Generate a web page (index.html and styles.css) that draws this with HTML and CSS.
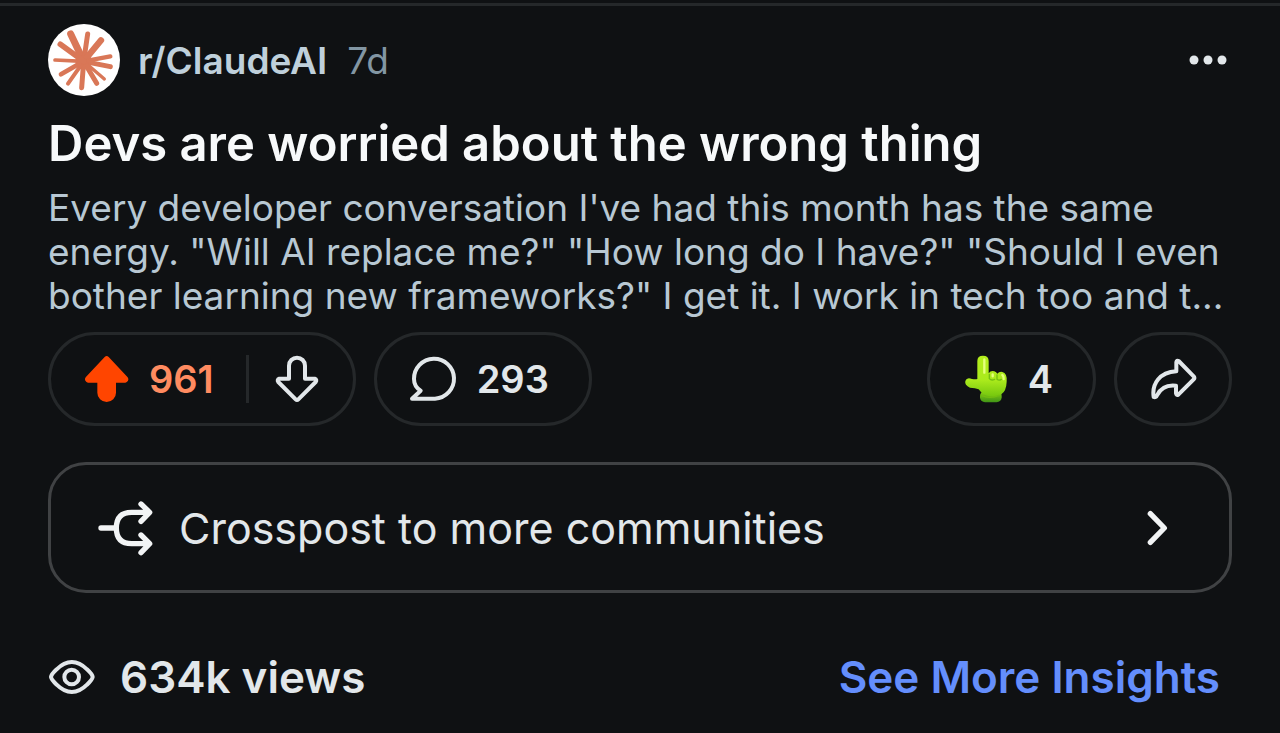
FILE: index.html
```html
<!DOCTYPE html>
<html lang="en">

<head>
    <meta charset="UTF-8">
    <meta name="viewport" content="width=device-width, initial-scale=1">
    <title>r/ClaudeAI</title>
    <link rel="stylesheet" href="styles.css">
</head>

<body>
    <article class="post">
        <header class="post-header">
            <svg class="avatar" viewBox="0 0 216 216" aria-hidden="true">
                <circle cx="108" cy="108" r="108" fill="#fff"/>
                <g stroke="#d97757" stroke-linecap="round">
                    <circle cx="107" cy="112" r="25" fill="#d97757" stroke="none"/>
                    <path d="M107 112L68 30" stroke-width="21"/>
                    <path d="M107 112L119 30" stroke-width="15"/>
                    <path d="M107 112L159 49" stroke-width="19"/>
                    <path d="M107 112L187 97" stroke-width="13"/>
                    <path d="M107 112L187 128" stroke-width="15"/>
                    <path d="M107 112L169 165" stroke-width="10"/>
                    <path d="M107 112L146 178" stroke-width="15"/>
                    <path d="M107 112L101 191" stroke-width="15"/>
                    <path d="M107 112L60 179" stroke-width="12"/>
                    <path d="M107 112L39 151" stroke-width="14"/>
                    <path d="M107 112L21 108" stroke-width="11"/>
                    <path d="M107 112L37 61" stroke-width="17"/>
                </g>
            </svg>
            <a class="community" href="#">r/ClaudeAI</a>
            <span class="age">7d</span>
            <button class="more" type="button" aria-label="More options">
                <svg viewBox="0 0 40 12"><g fill="#e2e7ea"><circle cx="6" cy="6" r="4.500"/><circle cx="20" cy="6" r="4.500"/><circle cx="34" cy="6" r="4.500"/></g></svg>
            </button>
        </header>

        <h1 class="title">Devs are worried about the wrong thing</h1>
        <p class="excerpt">Every developer conversation I've had this month has the same<br>energy. "Will AI replace me?" "How long do I have?" "Should I even<br>bother learning new frameworks?" I get it. I work in tech too and t...</p>

        <div class="actions">
            <div class="pill votes">
                <button class="upvote" type="button" aria-label="Upvote">
                    <svg class="icon" viewBox="0 0 144 144"><path fill="#ff4500" d="M65 6q6-6 12 0l57 61q4 5 1 10t-8 6H99v30a28 28 0 0 1-56 0V83H15q-5-1-8-6t1-10z"/></svg>
                    <span>961</span>
                </button>
                <button class="downvote" type="button" aria-label="Downvote">
                    <svg class="icon line" viewBox="0 0 144 144"><path d="M48 71V32a24 24 0 0 1 48 0V71H125Q133 74 128 81L76 133Q72 137 68 133L16 81Q11 74 19 71Z"/></svg>
                </button>
            </div>
            <button class="pill comments" type="button" aria-label="Comments">
                <svg class="icon line" viewBox="0 0 144 144"><path d="M78 131H9l26-24C22 99 15 86 15 72a60 60 0 1 1 63 59z"/></svg>
                <span>293</span>
            </button>
            <button class="pill award" type="button" aria-label="Awards">
                <svg class="icon" viewBox="0 0 144 144">
                    <defs>
                        <linearGradient id="hand" x1="0" y1="0" x2="0" y2="1">
                            <stop offset="0" stop-color="#b4ee1c"/>
                            <stop offset="0.6" stop-color="#aaea1c"/>
                            <stop offset="1" stop-color="#74c60e"/>
                        </linearGradient>
                        <linearGradient id="cuff" x1="0" y1="0" x2="0" y2="1">
                            <stop offset="0" stop-color="#8ed414"/>
                            <stop offset="1" stop-color="#3f9416"/>
                        </linearGradient>
                    </defs>
                    <rect x="54" y="108" width="65" height="34" rx="15" fill="url(#cuff)"/>
                    <path fill="url(#hand)" d="M46 72V18Q46 2 63 2T80 18V55Q86 46 97 49Q103 51 106 56Q112 49 121 51Q136 54 134 80Q133 108 118 118Q104 128 82 124Q62 120 50 103Q40 99 24 98Q7 91 10 78Q14 66 30 72Q40 74 46 72Z"/>
                    <path fill="none" stroke="#74bf10" stroke-width="4" stroke-linecap="round" d="M82 58v13q6 7 16 2M105 60v13q6 5 13 0M60 122q24 10 52-1"/>
                    <path fill="none" stroke="#e4ff7c" stroke-width="7" stroke-linecap="round" d="M67 13v40M92 58v6M121 60q5 4 4 12"/>
                </svg>
                <span>4</span>
            </button>
            <button class="pill share" type="button" aria-label="Share">
                <svg class="icon line" viewBox="0 0 144 144"><path d="M82 49V22q1-7 7-4l45 46q4 5 0 9l-46 46q-6 3-7-4V92C55 89 36 97 24 121q-4 8-10 5C8 86 32 52 82 49z"/></svg>
            </button>
        </div>

        <button class="crosspost" type="button">
            <svg class="branch" viewBox="0 0 168 168"><path d="M12 84H57M156 37H104Q58 37 58 84T104 131H156M132 12L158 37L132 64M132 105L158 131L132 158"/></svg>
            <span>Crosspost to more communities</span>
            <svg class="chevron" viewBox="0 0 72 108"><path d="M16 11L58 54L16 97"/></svg>
        </button>

        <footer class="stats">
            <svg class="icon line" viewBox="0 0 144 144"><path d="M9 72Q10 64 26 49Q48 27 71.500 27T117 49Q133 64 134 72Q133 80 117 95Q95 117 71.500 117T26 95Q10 80 9 72Z"/><circle cx="71" cy="72" r="22"/></svg>
            <span>634k views</span>
            <a class="insights" href="#">See More Insights</a>
        </footer>
    </article>
</body>

</html>
```
FILE: styles.css
```css
* {
    box-sizing: border-box;
}
body {
    margin: 0;
    background: #0f1113;
    color: #e2e7ea;
    font-family: Inter, "Liberation Sans", sans-serif;
}
button {
    margin: 0;
    padding: 0;
    border: 0;
    background: none;
    color: inherit;
    font: inherit;
    cursor: pointer;
}
a {
    text-decoration: none;
}
svg {
    display: block;
    flex: none;
}

.post {
    margin-top: 3px;
    padding: 18px 48px 24px;
    border-top: 3px solid #25282a;
}
.post-header {
    display: flex;
    align-items: center;
    height: 72px;
    font-size: 37px;
}
.avatar {
    width: 72px;
    height: 72px;
}
.community {
    margin-left: 18px;
    color: #bfd0db;
    font-weight: 600;
}
.age {
    margin-left: 20px;
    color: #8296a3;
}
.more {
    margin-left: auto;
    padding: 16px 4px 16px 16px;
}
.more svg {
    width: 40px;
    height: 12px;
}

.title {
    margin: 18px 0 0;
    color: #f7f9fa;
    font-size: 49px;
    font-weight: 600;
    line-height: 60px;
}
.excerpt {
    margin: 12px 0 0;
    color: #b8c8d3;
    font-size: 37px;
    line-height: 44px;
    white-space: nowrap;
}

.icon {
    width: 48px;
    height: 48px;
}
.line {
    fill: none;
    stroke: #e2e7ea;
    stroke-width: 12;
    stroke-linejoin: round;
}

.actions {
    display: flex;
    gap: 18px;
    margin-top: 14px;
    font-size: 38px;
    font-weight: 600;
}
.pill {
    display: flex;
    align-items: center;
    height: 94px;
    padding: 0 32px;
    border: 3px solid #25282a;
    border-radius: 47px;
}
.upvote {
    display: flex;
    align-items: center;
    gap: 18px;
    height: 48px;
    padding-right: 32px;
    border-right: 3px solid #25282a;
    color: #ff8b60;
}
.downvote {
    margin-left: 24px;
}
.comments {
    gap: 20px;
    padding-right: 40px;
}
.award {
    gap: 18px;
    margin-left: auto;
    padding-right: 40px;
}

.crosspost {
    display: flex;
    align-items: center;
    gap: 26px;
    width: 100%;
    height: 131px;
    margin-top: 36px;
    padding: 0 60px 0 46px;
    border: 3px solid #404244;
    border-radius: 38px;
    font-size: 43px;
}
.branch,
.chevron {
    fill: none;
    stroke: #f2f4f5;
    stroke-width: 16;
    stroke-linecap: round;
    stroke-linejoin: round;
}
.branch {
    width: 56px;
    height: 56px;
}
.chevron {
    width: 24px;
    height: 36px;
    margin-left: auto;
}

.stats {
    display: flex;
    align-items: center;
    gap: 24px;
    margin-top: 54px;
    padding-right: 12px;
    font-size: 44px;
    font-weight: 600;
    line-height: 60px;
}
.insights {
    margin-left: auto;
    color: #648efc;
}
```
